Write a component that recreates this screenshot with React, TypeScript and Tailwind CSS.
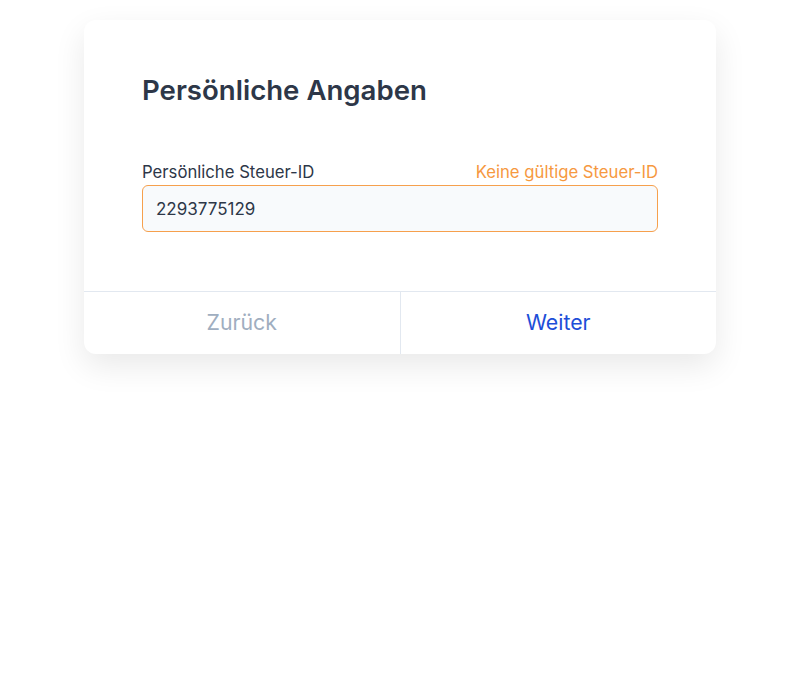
export default function App() {
  return (
    <div
      className="min-h-[673px] bg-white pt-[20px] pl-[84px]"
      style={{ fontFamily: "Inter, 'Noto Sans', sans-serif" }}
    >
      <div className="w-[632px] rounded-xl bg-white shadow-[0_12px_32px_rgba(0,0,0,0.09)]">
        <div className="px-[58px] pt-[52px] pb-[59px]">
          <h1 className="text-[27.6px] leading-[36px] font-semibold text-[#2d3748]">
            Persönliche Angaben
          </h1>
          <div className="mt-[52px] flex items-end justify-between text-[16.7px] leading-[24px]">
            <label className="text-[#2d3748]">Persönliche Steuer-ID</label>
            <span className="text-[#f6993f]">Keine gültige Steuer-ID</span>
          </div>
          <input
            defaultValue="2293775129"
            className="mt-[1px] block h-[47px] w-full rounded-md border-[1.5px] border-[#f6a04d] bg-[#f8fafc] px-[13px] text-[17px] text-[#2d3748] outline-none"
          />
        </div>
        <div className="flex h-[63px] border-t border-[#e2e8f0]">
          <button className="flex-1 text-[21.3px] text-[#a0aec0]">Zurück</button>
          <div className="w-px bg-[#e2e8f0]" />
          <button className="flex-1 text-[21.3px] text-[#1d4ed8]">Weiter</button>
        </div>
      </div>
    </div>
  );
}
